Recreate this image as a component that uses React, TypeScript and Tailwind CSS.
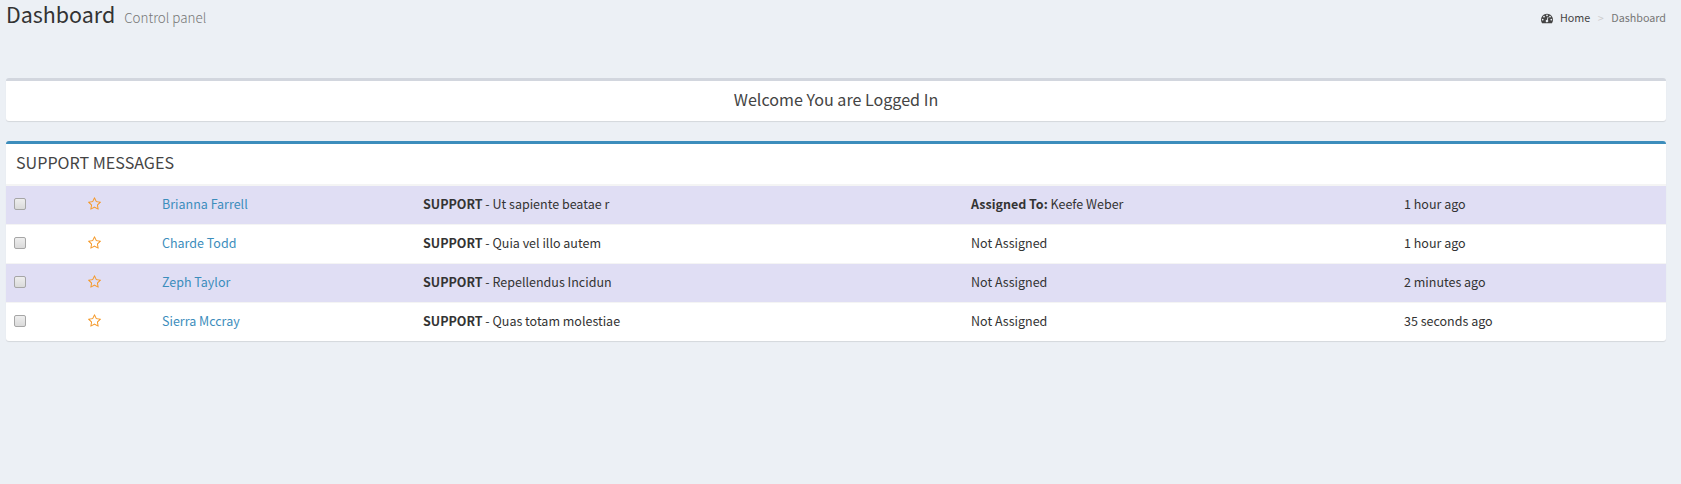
import React from "react";

const rows = [
  { name: "Brianna Farrell", subject: "Ut sapiente beatae r", assignee: "Keefe Weber", time: "1 hour ago" },
  { name: "Charde Todd", subject: "Quia vel illo autem", assignee: null, time: "1 hour ago" },
  { name: "Zeph Taylor", subject: "Repellendus Incidun", assignee: null, time: "2 minutes ago" },
  { name: "Sierra Mccray", subject: "Quas totam molestiae", assignee: null, time: "35 seconds ago" },
];

function GaugeIcon() {
  return (
    <svg viewBox="0 0 1792 1792" className="h-3 w-3 fill-[#444]" aria-hidden="true">
      <path d="M384 1152q0-53-37.5-90.5t-90.5-37.5-90.5 37.5-37.5 90.5 37.5 90.5 90.5 37.5 90.5-37.5 37.5-90.5zm192-448q0-53-37.5-90.5t-90.5-37.5-90.5 37.5-37.5 90.5 37.5 90.5 90.5 37.5 90.5-37.5 37.5-90.5zm428 481l101-382q6-26-7.5-48.5t-38.5-29.5-48 6.5-30 39.5l-101 382q-60 5-107 43.5t-63 98.5q-20 77 20 146t117 89 146-20 89-117q16-60-6-117t-72-91zm660-33q0-53-37.5-90.5t-90.5-37.5-90.5 37.5-37.5 90.5 37.5 90.5 90.5 37.5 90.5-37.5 37.5-90.5zm-640-640q0-53-37.5-90.5t-90.5-37.5-90.5 37.5-37.5 90.5 37.5 90.5 90.5 37.5 90.5-37.5 37.5-90.5zm448 192q0-53-37.5-90.5t-90.5-37.5-90.5 37.5-37.5 90.5 37.5 90.5 90.5 37.5 90.5-37.5 37.5-90.5zm320 448q0 261-141 483-19 29-54 29h-1402q-35 0-54-29-141-221-141-483 0-182 71-348t191-286 286-191 348-71 348 71 286 191 191 286 71 348z" />
    </svg>
  );
}

function StarIcon() {
  return (
    <svg viewBox="64 0 1792 1792" className="h-3.5 w-3.5 fill-[#f59a2c]" aria-hidden="true">
      <path d="M1201 1004l306-297-422-62-189-382-189 382-422 62 306 297-73 421 378-199 377 199zm527-357q0 22-26 48l-363 354 86 500q1 7 1 20 0 50-41 50-19 0-40-12l-449-236-449 236q-22 12-40 12-21 0-31.5-14.5t-10.5-35.5q0-6 2-20l86-500-364-354q-25-27-25-48 0-37 56-46l502-73 225-455q19-41 49-41t49 41l225 455 502 73q56 9 56 46z" />
    </svg>
  );
}

export default function App() {
  return (
    <div className="h-[484px] bg-[#ecf0f5] pr-[15px] pl-1.5 font-['Noto_Sans_CJK_SC',sans-serif] text-[12.5px] leading-5 text-[#333]">
      <header className="flex h-[78px] items-start justify-between">
        <h1 className="flex items-baseline text-[21.45px] leading-[28px]">
          Dashboard
          <small className="ml-[9px] text-[13.4px] font-light text-[#777]">Control panel</small>
        </h1>
        <nav className="flex h-[35px] items-center text-[10.75px]">
          <GaugeIcon />
          <a className="ml-[7px] text-[#444]">Home</a>
          <span className="mx-[7.5px] text-[#ccc]">&gt;</span>
          <span className="text-[#777]">Dashboard</span>
        </nav>
      </header>

      <section className="mb-5 flex h-[43px] items-center justify-center rounded-[3px] border-t-3 border-[#d2d6de] bg-white pb-1 text-[16.1px] text-[#444] shadow-[0_1px_1px_rgba(0,0,0,0.1)]">
        <h3>Welcome You are Logged In</h3>
      </section>

      <section className="overflow-hidden rounded-[3px] border-t-3 border-[#3c8dbc] bg-white shadow-[0_1px_1px_rgba(0,0,0,0.1)]">
        <h3 className="flex h-10 items-center pb-1 pl-2.5 text-[16.1px] text-[#444]">SUPPORT MESSAGES</h3>
        <div className="border-t border-[#f4f4f4]">
          {rows.map((row) => (
            <div
              key={row.name}
              className="grid h-[39px] grid-cols-[74px_82px_261px_548px_433px_1fr] items-center border-t border-[#f4f4f4] pb-0.5 odd:bg-[#e0def4]"
            >
              <span className="pl-2">
                <span className="block h-3 w-3 rounded-[2px] border border-[#a6a6a6] bg-linear-to-b from-[#eee] to-[#dadada]" />
              </span>
              <span className="pl-2">
                <StarIcon />
              </span>
              <a className="text-[#3c8dbc]">{row.name}</a>
              <span>
                <b>SUPPORT</b> - {row.subject}
              </span>
              <span>
                {row.assignee ? (
                  <>
                    <b>Assigned To:</b> {row.assignee}
                  </>
                ) : (
                  "Not Assigned"
                )}
              </span>
              <span>{row.time}</span>
            </div>
          ))}
        </div>
      </section>
    </div>
  );
}
